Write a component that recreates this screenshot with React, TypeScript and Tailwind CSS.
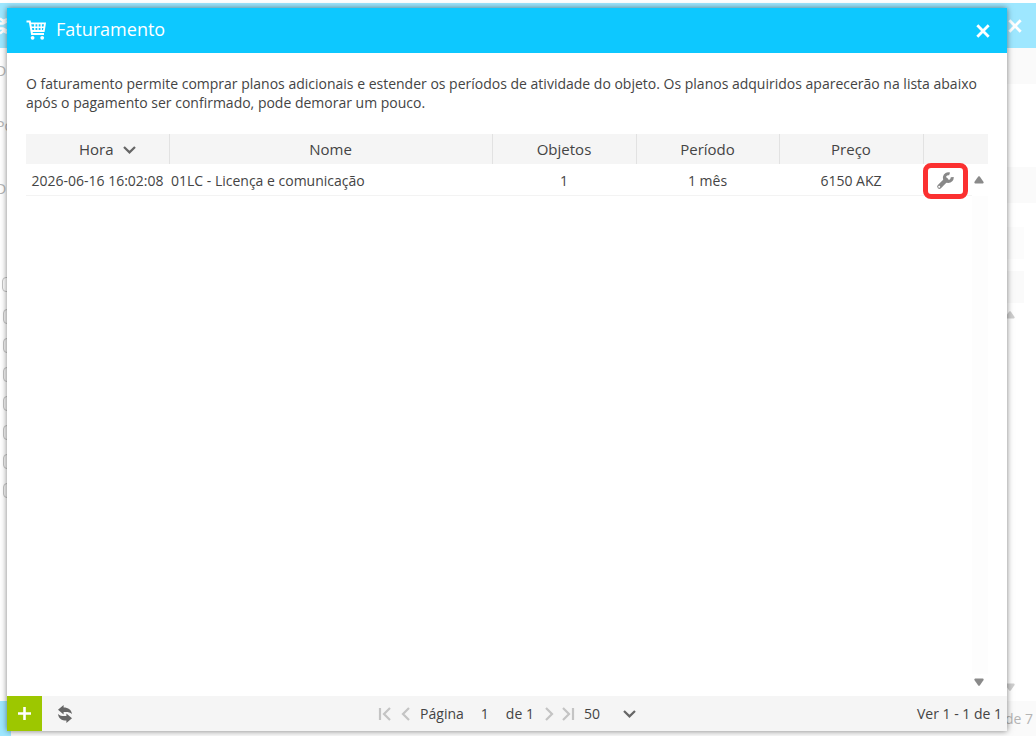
const columns = [
  { label: "Nome", width: "w-auto" },
  { label: "Objetos", width: "w-36" },
  { label: "Período", width: "w-[143px]" },
  { label: "Preço", width: "w-36" },
];

const plans = [
  {
    time: "2026-06-16 16:02:08",
    name: "01LC - Licença e comunicação",
    objects: "1",
    period: "1 mês",
    price: "6150 AKZ",
  },
];

const backdropRows = [1, 2, 3, 4, 5, 6, 7];

function CartIcon() {
  return (
    <svg width="20" height="20" viewBox="0 0 20 20" fill="none" stroke="currentColor" aria-hidden="true">
      <path d="M0.5 1.6H3.8L6 14H18" strokeWidth="2" />
      <path d="M4 3.4H19L17.8 11H5.6" strokeWidth="1.8" />
      <path d="M4.6 7.2H18.4M8.8 3.4V11M12 3.4V11M15.2 3.4V11" strokeWidth="1.4" />
      <circle cx="6.6" cy="17.8" r="1.9" fill="currentColor" stroke="none" />
      <circle cx="16.2" cy="17.8" r="1.9" fill="currentColor" stroke="none" />
    </svg>
  );
}

function WrenchIcon() {
  return (
    <svg width="18" height="18" viewBox="0 0 18 18" fill="none" stroke="currentColor" aria-hidden="true">
      <path d="M13.6 1.9A3.9 3.9 0 1 0 16.2 5.2" strokeWidth="3" />
      <path d="M10 8L3.4 14.6" strokeWidth="4.4" strokeLinecap="round" />
      <path d="M8.6 5.4L12.2 9.2" strokeWidth="2.6" />
      <circle cx="3.2" cy="14.8" r="1" fill="white" stroke="none" />
    </svg>
  );
}

function CloseIcon() {
  return (
    <svg width="14" height="14" viewBox="0 0 14 14" fill="none" stroke="currentColor" strokeWidth="2.8" aria-hidden="true">
      <path d="M1.3 1.3L12.7 12.7M12.7 1.3L1.3 12.7" />
    </svg>
  );
}

function ChevronDown() {
  return (
    <svg width="13" height="8" viewBox="0 0 13 8" fill="none" stroke="#666666" strokeWidth="2.2" aria-hidden="true">
      <path d="M1 1L6.5 6.4L12 1" />
    </svg>
  );
}

function PageIcon({ path }: { path: string }) {
  return (
    <svg width="14" height="14" viewBox="0 0 14 14" fill="none" stroke="currentColor" strokeWidth="2.2" aria-hidden="true">
      <path d={path} />
    </svg>
  );
}

function RefreshIcon() {
  return (
    <svg width="14" height="18" viewBox="0 0 14 18" fill="currentColor" aria-hidden="true">
      <path d="M0 4.8L5.6 0V2.4C10.4 2.4 13.4 4.6 14 9C11.8 7 9.6 6.8 5.6 7V9.4Z" />
      <path d="M14 13.2L8.4 18V15.6C3.6 15.6 0.6 13.4 0 9C2.2 11 4.4 11.2 8.4 11V8.6Z" />
    </svg>
  );
}

function Triangle({ down = false }: { down?: boolean }) {
  return (
    <svg width="10" height="8" viewBox="0 0 10 8" fill="currentColor" className={down ? "rotate-180" : ""} aria-hidden="true">
      <path d="M4.2 0.6Q5 0 5.8 0.6L9.6 6Q10 7.4 8.8 7.5H1.2Q0 7.4 0.4 6Z" />
    </svg>
  );
}

function Backdrop() {
  return (
    <div className="flex h-full flex-col overflow-hidden pt-[3px] text-[#b4b4b4]" aria-hidden="true">
      <div className="flex h-[45px] shrink-0 items-center justify-between bg-[#9ee7ff] pr-[14px] text-white">
        <svg width="7" height="18" viewBox="0 0 7 18" fill="none" stroke="currentColor" strokeWidth="2.4">
          <path d="M0 1.5L3 4L7 2M0 6.5H3L7 4.5" />
          <path d="M0 11.5H3L7 13.5M0 16.5L3 14L7 16" />
        </svg>
        <CloseIcon />
      </div>
      <div className="flex min-h-0 flex-1 justify-between">
        <div className="w-3 shrink-0 overflow-hidden">
          <div className="-ml-1 flex h-[46px] items-center">D</div>
          <div className="-ml-1 flex h-16 items-center">Po</div>
          <div className="-ml-1 flex h-[62px] items-center">D</div>
          <div className="mt-[57px] ml-[2px] h-[15px] w-4 rounded-sm border border-[#c4c4c4]"></div>
          <div className="mt-[17px] ml-[3px] flex flex-col gap-[14px]">
            {backdropRows.map((row) => (
              <div key={row} className="h-[15px] w-4 rounded-sm border border-[#c4c4c4] bg-[#f4f4f4]"></div>
            ))}
          </div>
        </div>
        <div className="flex w-[31px] shrink-0 flex-col text-[#cfcfcf]">
          <div className="h-9 bg-[#fafafa]"></div>
          <div className="mt-[83px] h-9 bg-[#fafafa]"></div>
          <div className="mt-6 mr-3 h-8 bg-[#fcfcfc]"></div>
          <div className="mt-3 mr-3 mb-2 h-8 bg-[#fafafa]"></div>
          <Triangle />
          <div className="mb-[10px] flex flex-1 items-end">
            <Triangle down />
          </div>
        </div>
      </div>
      <div className="flex h-[35px] shrink-0 items-center justify-between bg-[#fafafa] pr-[3px]">
        <div className="h-full w-[11px] bg-[#9ee7ff]"></div>
        <span>de 7</span>
      </div>
    </div>
  );
}

function PlansTable() {
  return (
    <div className="relative flex-1">
      <table className="w-full table-fixed border-collapse">
        <thead className="bg-[#f5f5f5] text-[15px]">
          <tr className="h-[30px]">
            <th className="w-[143px] border-r border-[#e2e2e2] pt-[2px] pr-0 pb-0 pl-5 font-normal">
              <button className="inline-flex items-center gap-[9px]">
                Hora
                <ChevronDown />
              </button>
            </th>
            {columns.map((column) => (
              <th key={column.label} className={`${column.width} border-r border-[#e2e2e2] px-0 pt-[2px] pb-0 font-normal`}>
                {column.label}
              </th>
            ))}
            <td className="w-[65px] p-0"></td>
          </tr>
        </thead>
        <tbody>
          {plans.map((plan) => (
            <tr key={plan.time} className="h-[31px] border-b border-[#f3f3f3] text-center">
              <td className="px-0 pt-1 pb-0 whitespace-nowrap">{plan.time}</td>
              <td className="pt-1 pr-0 pb-0 pl-[2px] text-left">{plan.name}</td>
              <td className="px-0 pt-1 pb-0">{plan.objects}</td>
              <td className="px-0 pt-1 pb-0">{plan.period}</td>
              <td className="px-0 pt-1 pb-0">{plan.price}</td>
              <td className="px-0 pt-1 pb-0">
                <div className="relative flex w-[45px] justify-center pr-[2px] text-[#888888]">
                  <button aria-label="Ativar plano">
                    <WrenchIcon />
                  </button>
                  <span className="pointer-events-none absolute inset-x-0 -inset-y-[9px] rounded-lg border-[5px] border-[#fb3030]"></span>
                </div>
              </td>
            </tr>
          ))}
        </tbody>
      </table>
      <div className="absolute top-[30px] right-0 bottom-[6px] flex w-4 flex-col items-start bg-white text-[#8a8a8a]">
        <button className="ml-[2px] flex h-8 items-center" aria-label="Rolar para cima">
          <Triangle />
        </button>
        <div className="w-full flex-1 bg-[#fdfdfd]"></div>
        <button className="ml-[2px] flex h-4 items-center" aria-label="Rolar para baixo">
          <Triangle down />
        </button>
      </div>
    </div>
  );
}

function Pager() {
  return (
    <footer className="grid h-[35px] shrink-0 grid-cols-[1fr_auto_1fr] items-center bg-[#f5f5f5]">
      <div className="flex h-full items-center">
        <button className="flex size-[35px] items-center justify-center bg-[#9dc700] text-white" aria-label="Adicionar">
          <svg width="13" height="13" viewBox="0 0 13 13" stroke="currentColor" strokeWidth="2.6" aria-hidden="true">
            <path d="M6.5 0V13M0 6.5H13" />
          </svg>
        </button>
        <button className="ml-4 text-[#666666]" aria-label="Atualizar">
          <RefreshIcon />
        </button>
      </div>
      <div className="flex items-center pl-1">
        <div className="flex gap-2 text-[#c4c4c4]">
          <button aria-label="Primeira página">
            <PageIcon path="M2 1V13M12 1L6 7L12 13" />
          </button>
          <button aria-label="Página anterior">
            <PageIcon path="M9 1L3 7L9 13" />
          </button>
        </div>
        <label className="ml-[6px] flex items-center">
          Página
          <input className="mx-2 w-[26px] bg-transparent text-center" defaultValue="1" />
        </label>
        <span>de 1</span>
        <div className="ml-2 flex gap-[6px] text-[#c4c4c4]">
          <button aria-label="Próxima página">
            <PageIcon path="M4 1L10 7L4 13" />
          </button>
          <button aria-label="Última página">
            <PageIcon path="M1 1L7 7L1 13M11 1V13" />
          </button>
        </div>
        <div className="relative ml-2 flex items-center">
          <select className="w-14 appearance-none bg-transparent" aria-label="Linhas por página" defaultValue="50">
            <option>25</option>
            <option>50</option>
            <option>100</option>
          </select>
          <span className="pointer-events-none absolute right-1">
            <ChevronDown />
          </span>
        </div>
      </div>
      <span className="pr-[5px] text-right">Ver 1 - 1 de 1</span>
    </footer>
  );
}

export default function App() {
  return (
    <div className="relative h-screen overflow-hidden bg-white font-['Open_Sans',sans-serif] text-sm text-[#444444]">
      <Backdrop />
      <section
        role="dialog"
        aria-labelledby="billing-title"
        className="absolute top-2 right-[29px] bottom-[5px] left-[7px] flex flex-col bg-white shadow-[0_0_6px_rgba(0,0,0,0.5)]"
      >
        <header className="flex h-[45px] shrink-0 items-center bg-[#0dc8ff] pr-[17px] pb-[2px] pl-[19px] text-white">
          <CartIcon />
          <h1 id="billing-title" className="ml-[10px] flex-1 pb-[2px] text-lg">
            Faturamento
          </h1>
          <button className="pt-[2px]" aria-label="Fechar">
            <CloseIcon />
          </button>
        </header>
        <div className="flex flex-1 flex-col px-[19px] pt-[21px]">
          <p className="mb-[22px] leading-[19px]">
            O faturamento permite comprar planos adicionais e estender os períodos de atividade do objeto. Os planos
            adquiridos aparecerão na lista abaixo após o pagamento ser confirmado, pode demorar um pouco.
          </p>
          <PlansTable />
        </div>
        <Pager />
      </section>
    </div>
  );
}
